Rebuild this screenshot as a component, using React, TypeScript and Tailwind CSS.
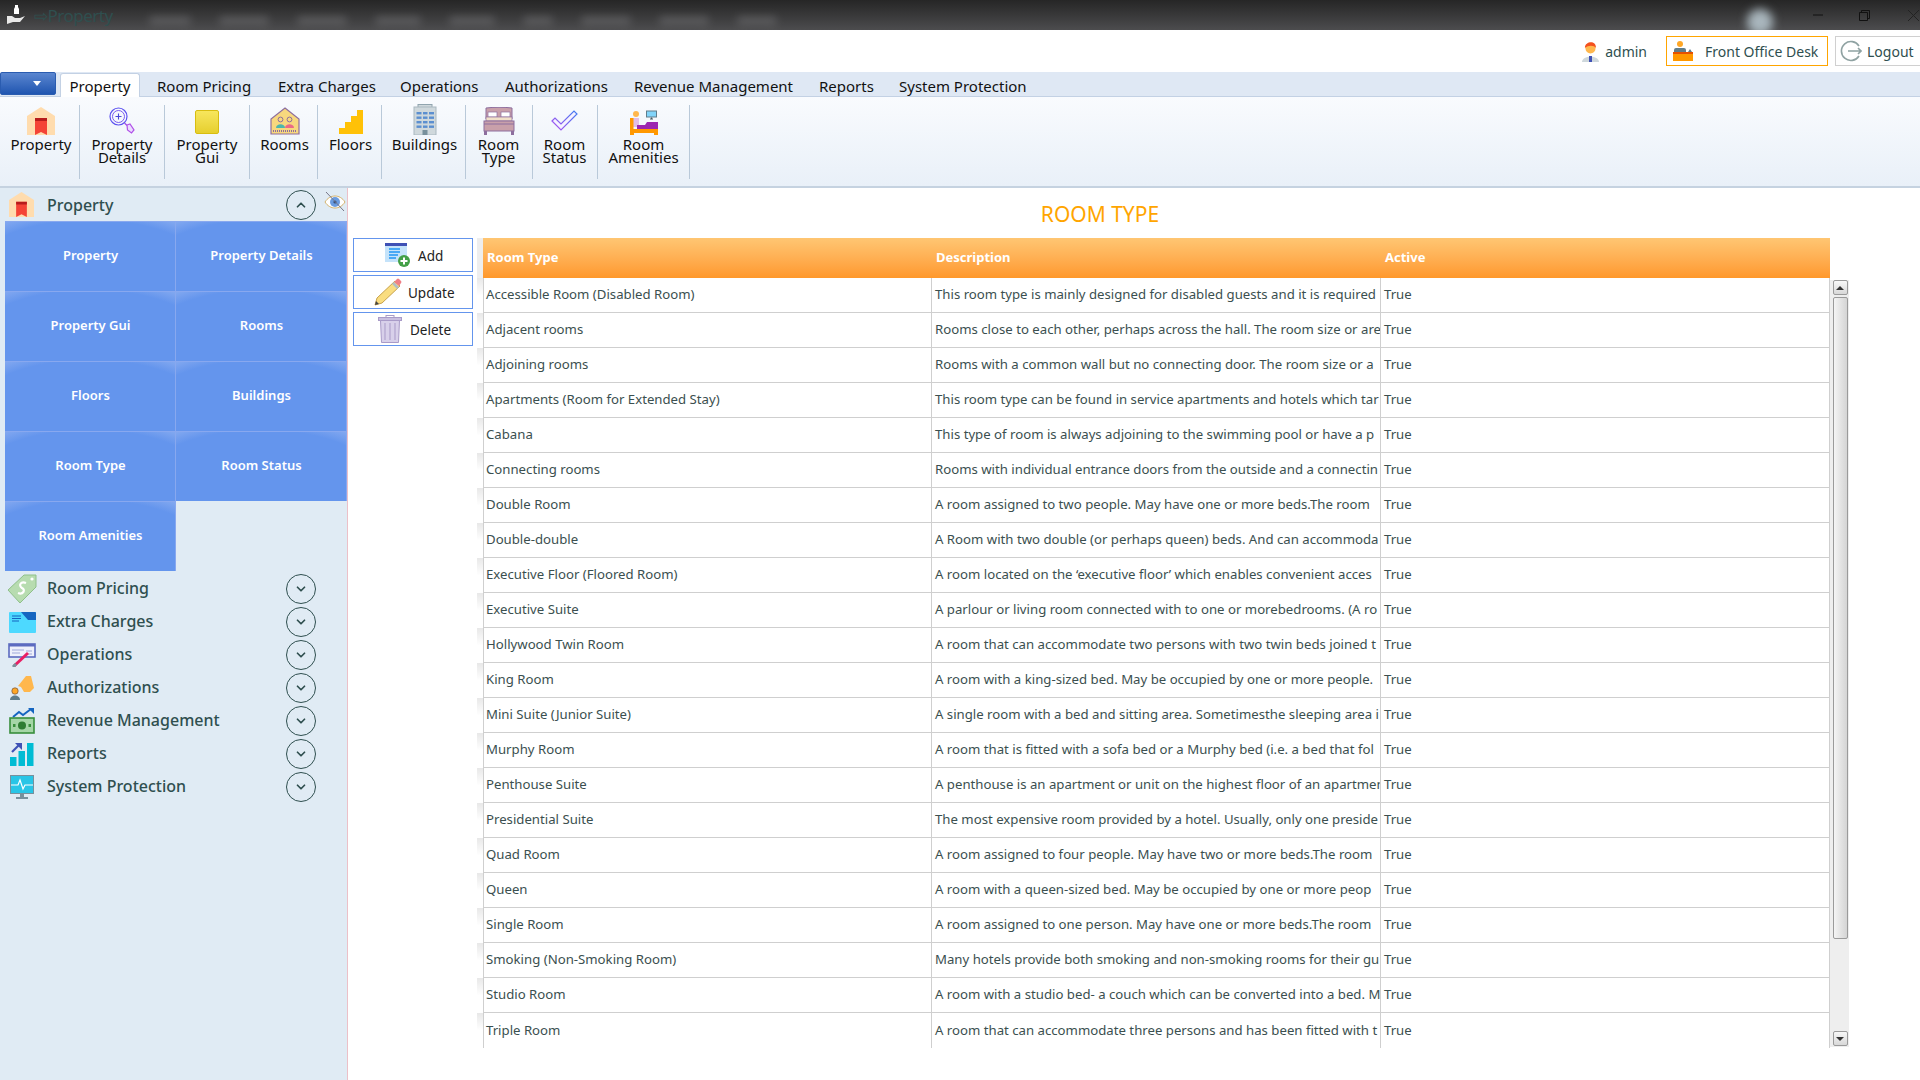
import { ChevronDown, ChevronUp } from 'lucide-react';

const tabs = [
  { label: 'Room Pricing', cls: 'w-[121px]' },
  { label: 'Extra Charges', cls: 'w-[122px]' },
  { label: 'Operations', cls: 'w-[105px]' },
  { label: 'Authorizations', cls: 'w-[129px]' },
  { label: 'Revenue Management', cls: 'w-[185px]' },
  { label: 'Reports', cls: 'w-[80px]' },
  { label: 'System Protection', cls: 'w-[140px]' },
];

function HouseIcon({ cls }: { cls: string }) {
  return (
    <svg viewBox="0 0 28 28" className={cls}>
      <path d="M14 0 L28 9 V28 H0 V9 Z" fill="#ffdcae" />
      <path d="M8 11 H20 V28 L14 25 L8 28 Z" fill="#f44336" />
      <rect x="8" y="11" width="12" height="3" fill="#b71c1c" />
    </svg>
  );
}

function DetailsIcon() {
  return (
    <svg viewBox="0 0 26 28" className="w-[26px] h-[28px]" fill="none">
      <circle cx="9.5" cy="9.5" r="8.5" stroke="#5c52f0" strokeWidth="1.2" />
      <circle cx="9.5" cy="9.5" r="6" stroke="#7a5cf0" strokeWidth="1" />
      <path d="M9.5 6.5 V12.5 M6.5 9.5 H12.5" stroke="#4a48d8" strokeWidth="1.1" />
      <path d="M15.5 16 L18 18.5" stroke="#a050e8" strokeWidth="1.2" />
      <path d="M18 18 L21 17 L25 23 L22.5 26 L18.5 23 Z" fill="#eadcff" stroke="#b050e8" strokeWidth="1.2" />
    </svg>
  );
}

function GuiIcon() {
  return <div className="w-[24px] h-[24px] mb-[1px] rounded-[2px] border border-[#d8bd10] bg-gradient-to-b from-[#f7e65c] to-[#e6cf2c]" />;
}

function RoomsIcon() {
  return (
    <svg viewBox="0 0 30 28" className="w-[30px] h-[28px]">
      <path d="M15 1 L29 12 V27 H1 V12 Z" fill="#f7d87e" stroke="#8d6e9e" strokeWidth="1.2" />
      <circle cx="10.5" cy="12.5" r="2.4" fill="#f7d87e" stroke="#8d6e9e" />
      <circle cx="19.5" cy="12.5" r="2.4" fill="#f7d87e" stroke="#8d6e9e" />
      <path d="M6 21 C6 16 15 16 15 21 Z" fill="#4db6ac" />
      <path d="M15 21 C15 16 24 16 24 21 Z" fill="#ec6a86" />
      <path d="M3 24 H27" stroke="#8d6e9e" strokeWidth="2" strokeDasharray="1 1" />
    </svg>
  );
}

function FloorsIcon() {
  return (
    <svg viewBox="0 0 24 24" className="w-[24px] h-[24px] mb-[1px]">
      <path d="M0 24 V18 H6 V12 H12 V6 H18 V0 H24 V24 Z" fill="#ffc107" />
    </svg>
  );
}

function BuildingIcon() {
  const ys = [8, 12.5, 17, 21.5];
  return (
    <svg viewBox="0 0 24 31" className="w-[24px] h-[31px]">
      <rect x="5" y="0.5" width="14" height="3" fill="#cfd8dc" stroke="#90a4ae" />
      <rect x="1" y="3" width="22" height="28" fill="#cfd8dc" stroke="#a9b8c0" />
      {ys.map((y) => (
        <g key={y} fill="#5b8fd0">
          <rect x="3.5" y={y} width="5" height="2.4" />
          <rect x="10" y={y} width="4.5" height="2.4" />
          <rect x="16" y={y} width="5" height="2.4" />
        </g>
      ))}
      <rect x="9.5" y="26" width="5" height="5" fill="#78909c" />
    </svg>
  );
}

function BedIcon() {
  return (
    <svg viewBox="0 0 32 28" className="w-[32px] h-[28px]">
      <path d="M3 1 C10 0 22 0 29 1 V12 H3 Z" fill="#c9a0aa" stroke="#8d6e9e" />
      <rect x="5" y="5" width="9" height="5" fill="#fff" stroke="#8d6e9e" strokeWidth="0.7" />
      <rect x="18" y="5" width="9" height="5" fill="#fff" stroke="#8d6e9e" strokeWidth="0.7" />
      <rect x="3" y="10" width="26" height="4" fill="#f1dfc8" stroke="#8d6e9e" strokeWidth="0.7" />
      <rect x="1" y="14" width="30" height="10" fill="#c9a0aa" stroke="#8d6e9e" />
      <path d="M1 17 H31" stroke="#8d6e9e" />
      <rect x="1" y="24" width="3" height="4" fill="#8d6e9e" />
      <rect x="28" y="24" width="3" height="4" fill="#8d6e9e" />
    </svg>
  );
}

function CheckIcon() {
  return (
    <svg viewBox="0 0 27 21" className="w-[27px] h-[21px] mb-[4px]">
      <defs>
        <linearGradient id="chk" x1="0" y1="1" x2="1" y2="0">
          <stop offset="0" stopColor="#b14ff0" />
          <stop offset="1" stopColor="#3f7df0" />
        </linearGradient>
      </defs>
      <path d="M1 11 L4 8 L10 14 L23 1 L26 4 L10 20 Z" fill="#f6f3ff" stroke="url(#chk)" strokeWidth="1.2" />
    </svg>
  );
}

function AmenitiesIcon() {
  return (
    <svg viewBox="0 0 28 25" className="w-[28px] h-[25px]">
      <circle cx="6" cy="4" r="3" fill="#ffb74d" />
      <rect x="3" y="8" width="6" height="9" fill="#e1bee7" />
      <rect x="0" y="8" width="3.5" height="15" fill="#ff9800" />
      <rect x="0" y="19" width="28" height="4" fill="#ff9800" />
      <rect x="24" y="19" width="4" height="6" fill="#ff9800" />
      <rect x="0" y="21" width="4" height="4" fill="#ff9800" />
      <path d="M7 15 H15 L17 12 H28 V19 H7 Z" fill="#9c27b0" />
      <rect x="16" y="0.5" width="11" height="7" fill="#607d8b" />
      <rect x="17" y="1.5" width="9" height="5" fill="#81d4fa" />
      <path d="M20 9 H23 M21.5 7.5 V9" stroke="#455a64" strokeWidth="1.2" />
    </svg>
  );
}

const ribbon = [
  { label: ['Property'], cls: 'w-[80px] pl-[3px]', icon: <HouseIcon cls="w-[28px] h-[28px]" /> },
  { label: ['Property', 'Details'], cls: 'w-[85px]', icon: <DetailsIcon /> },
  { label: ['Property', 'Gui'], cls: 'w-[85px]', icon: <GuiIcon /> },
  { label: ['Rooms'], cls: 'w-[68px] pl-[2px]', icon: <RoomsIcon /> },
  { label: ['Floors'], cls: 'w-[64px] pl-[2px]', icon: <FloorsIcon /> },
  { label: ['Buildings'], cls: 'w-[84px] pl-[2px]', icon: <BuildingIcon /> },
  { label: ['Room', 'Type'], cls: 'w-[67px] pr-[1px]', icon: <BedIcon /> },
  { label: ['Room', 'Status'], cls: 'w-[65px] pr-[1px]', icon: <CheckIcon /> },
  { label: ['Room', 'Amenities'], cls: 'w-[92px]', icon: <AmenitiesIcon /> },
];

const tiles = ['Property', 'Property Details', 'Property Gui', 'Rooms', 'Floors', 'Buildings', 'Room Type', 'Room Status', 'Room Amenities'];

function TagIcon() {
  return (
    <svg viewBox="0 0 30 30" className="w-[30px] h-[30px]">
      <path d="M1 16 L17 1 L29 1 L29 13 L13 29 Z" fill="#b7dcb0" stroke="#8fc08a" />
      <circle cx="25" cy="5" r="1.6" fill="#fff" />
      <path d="M19 9 C14 7 11 11 15 14 C19 16 16 21 11 19" fill="none" stroke="#fff" strokeWidth="2.2" />
    </svg>
  );
}

function FolderIcon() {
  return (
    <svg viewBox="0 0 28 22" className="w-[28px] h-[22px]">
      <path d="M1 2 Q1 1 2 1 H27 Q28 1 28 2 V21 Q28 22 27 22 H2 Q1 22 1 21 Z" fill="#4dd9ff" />
      <path d="M13 1 H27 Q28 1 28 2 V9 H20 Z" fill="#1565c0" />
      <path d="M4 5 H13 M4 7.5 H13 M4 10 H11" stroke="#1565c0" strokeWidth="1.1" />
    </svg>
  );
}

function ChequeIcon() {
  return (
    <svg viewBox="0 0 28 24" className="w-[28px] h-[24px]">
      <rect x="1" y="1" width="26" height="13" fill="#eef0fb" stroke="#5c6bc0" strokeWidth="1.6" />
      <rect x="1" y="1" width="26" height="2.5" fill="#5c6bc0" />
      <path d="M4 7 H16 M4 10 H12 M18 8 H24 M18 11 H24" stroke="#9fa8da" />
      <path d="M6 23 L20 10" stroke="#e91e63" strokeWidth="3" />
      <path d="M5 24 L8 21" stroke="#78909c" strokeWidth="3" />
    </svg>
  );
}

function HandIcon() {
  return (
    <svg viewBox="0 0 26 26" className="w-[26px] h-[26px]">
      <path d="M9 11 L17 1 H22 L25 13 L21 17 H15 L12 12 Z" fill="#ffb74d" />
      <circle cx="6" cy="16" r="3.2" fill="#ffa726" stroke="#5d4037" strokeWidth="0.6" />
      <path d="M1 25 C1 19 11 19 11 25 Z" fill="#607d8b" />
    </svg>
  );
}

function MoneyIcon() {
  return (
    <svg viewBox="0 0 26 26" className="w-[26px] h-[26px]">
      <path d="M4 9 L10 4 L14 7 L22 1" fill="none" stroke="#1565c0" strokeWidth="2" />
      <path d="M19 0 H25 V6 Z" fill="#1565c0" />
      <rect x="1" y="10" width="24" height="15" fill="#a5d6a7" stroke="#388e3c" strokeWidth="1.6" />
      <circle cx="13" cy="17.5" r="4" fill="#2e7d32" />
      <rect x="4" y="16" width="2.5" height="3" fill="#388e3c" />
      <rect x="19.5" y="16" width="2.5" height="3" fill="#388e3c" />
    </svg>
  );
}

function BarsIcon() {
  return (
    <svg viewBox="0 0 24 24" className="w-[24px] h-[24px]">
      <rect x="0" y="15" width="6.5" height="9" fill="#00bcd4" />
      <rect x="8.5" y="9" width="6.5" height="15" fill="#00bcd4" />
      <rect x="17" y="1" width="6.5" height="23" fill="#00bcd4" />
      <path d="M2 10 L9 3" stroke="#3f51b5" strokeWidth="2.2" />
      <path d="M5 1 H12 V8 Z" fill="#3f51b5" />
    </svg>
  );
}

function MonitorIcon() {
  return (
    <svg viewBox="0 0 24 24" className="w-[24px] h-[24px]">
      <rect x="0.5" y="0.5" width="23" height="18" fill="#29c5e6" stroke="#78909c" />
      <path d="M1 10 H8 L10 5 L13 14 L15 10 H23" fill="none" stroke="#fff" strokeWidth="1.2" />
      <rect x="10" y="19" width="4" height="3" fill="#78909c" />
      <rect x="6" y="22" width="12" height="2" fill="#78909c" />
    </svg>
  );
}

const sections = [
  { label: 'Room Pricing', icon: <TagIcon /> },
  { label: 'Extra Charges', icon: <FolderIcon /> },
  { label: 'Operations', icon: <ChequeIcon /> },
  { label: 'Authorizations', icon: <HandIcon /> },
  { label: 'Revenue Management', icon: <MoneyIcon /> },
  { label: 'Reports', icon: <BarsIcon /> },
  { label: 'System Protection', icon: <MonitorIcon /> },
];

const rows = [
  ['Accessible Room (Disabled Room)', 'This room type is mainly designed for disabled guests and it is required'],
  ['Adjacent rooms', 'Rooms close to each other, perhaps across the hall. The room size or are'],
  ['Adjoining rooms', 'Rooms with a common wall but no connecting door. The room size or a'],
  ['Apartments (Room for Extended Stay)', 'This room type can be found in service apartments and hotels which tar'],
  ['Cabana', 'This type of room is always adjoining to the swimming pool or have a p'],
  ['Connecting rooms', 'Rooms with individual entrance doors from the outside and a connectin'],
  ['Double Room', 'A room assigned to two people. May have one or more beds.The room'],
  ['Double-double', 'A Room with two double (or perhaps queen) beds. And can accommoda'],
  ['Executive Floor (Floored Room)', 'A room located on the ‘executive floor’ which enables convenient acces'],
  ['Executive Suite', 'A parlour or living room connected with to one or morebedrooms. (A ro'],
  ['Hollywood Twin Room', 'A room that can accommodate two persons with two twin beds joined t'],
  ['King Room', 'A room with a king-sized bed. May be occupied by one or more people.'],
  ['Mini Suite (Junior Suite)', 'A single room with a bed and sitting area. Sometimesthe sleeping area i'],
  ['Murphy Room', 'A room that is fitted with a sofa bed or a Murphy bed (i.e. a bed that fol'],
  ['Penthouse Suite', 'A penthouse is an apartment or unit on the highest floor of an apartmen'],
  ['Presidential Suite', 'The most expensive room provided by a hotel. Usually, only one preside'],
  ['Quad Room', 'A room assigned to four people. May have two or more beds.The room'],
  ['Queen', 'A room with a queen-sized bed. May be occupied by one or more peop'],
  ['Single Room', 'A room assigned to one person. May have one or more beds.The room'],
  ['Smoking (Non-Smoking Room)', 'Many hotels provide both smoking and non-smoking rooms for their gu'],
  ['Studio Room', 'A room with a studio bed- a couch which can be converted into a bed. M'],
  ['Triple Room', 'A room that can accommodate three persons and has been fitted with t'],
];

function TitleBar() {
  return (
    <div className="h-[30px] flex items-center bg-gradient-to-b from-[#262626] to-[#4c4c4e] overflow-hidden shrink-0">
      <svg viewBox="0 0 20 22" className="w-[20px] h-[22px] ml-[6px]">
        <path d="M9 1 H12 V3 L13 5 V10 H8 V5 L9 3 Z" fill="#fff" />
        <path d="M1 12 H6 L9 14 H14 L19 12 L14 18 H7 L1 20 Z" fill="#e8e8e8" />
      </svg>
      <span className="ml-[8px] text-[17px] tracking-[-0.5px] leading-none text-[#2f4f4f]">⇨Property</span>
      <div className="ml-[36px] flex gap-[28px] mt-[12px] opacity-70">
        <div className="w-[42px] h-[8px] rounded-full bg-[#6a6a6c] blur-[4px]" />
        <div className="w-[50px] h-[8px] rounded-full bg-[#6a6a6c] blur-[4px]" />
        <div className="w-[50px] h-[8px] rounded-full bg-[#6a6a6c] blur-[4px]" />
        <div className="w-[46px] h-[8px] rounded-full bg-[#6a6a6c] blur-[4px]" />
        <div className="w-[46px] h-[8px] rounded-full bg-[#6a6a6c] blur-[4px]" />
        <div className="w-[30px] h-[8px] rounded-full bg-[#6a6a6c] blur-[4px]" />
        <div className="w-[50px] h-[8px] rounded-full bg-[#6a6a6c] blur-[4px]" />
        <div className="w-[50px] h-[8px] rounded-full bg-[#6a6a6c] blur-[4px]" />
        <div className="w-[40px] h-[8px] rounded-full bg-[#6a6a6c] blur-[4px]" />
      </div>
      <div className="ml-auto w-[26px] h-[26px] mt-[14px] rounded-full bg-[#a9b6bd] blur-[5px]" />
      <svg viewBox="0 0 10 10" className="w-[10px] h-[10px] ml-[40px]" fill="none" stroke="#111">
        <path d="M0 5 H10" />
      </svg>
      <svg viewBox="0 0 11 11" className="w-[11px] h-[11px] ml-[36px]" fill="none" stroke="#111">
        <path d="M0.5 2.5 H8.5 V10.5 H0.5 Z M2.5 2.5 V0.5 H10.5 V8.5 H8.5" />
      </svg>
      <svg viewBox="0 0 11 11" className="w-[11px] h-[11px] ml-[38px] mr-[1px]" fill="none" stroke="#222">
        <path d="M0 0 L11 11 M11 0 L0 11" />
      </svg>
    </div>
  );
}

function TopBar() {
  return (
    <div className="h-[42px] flex items-center justify-end bg-white text-[14px] text-[#2f4f4f] shrink-0">
      <svg viewBox="0 0 17 21" className="w-[17px] h-[21px]">
        <path d="M0 21 C0 14 17 14 17 21 Z" fill="#cfd8dc" />
        <rect x="7" y="15" width="3" height="6" fill="#3f51b5" />
        <circle cx="8.5" cy="7.5" r="5" fill="#ffb74d" />
        <path d="M3 7 C2 1 14 -2 14 7 C12 4 6 4 3 7 Z" fill="#f4511e" />
      </svg>
      <span className="ml-[6px]">admin</span>
      <div className="ml-[19px] w-[162px] h-[30px] flex items-center border border-[#ffa500]">
        <svg viewBox="0 0 20 20" className="w-[20px] h-[20px] ml-[6px]">
          <circle cx="7" cy="3" r="3" fill="#ffa726" />
          <path d="M1 11 V9 Q1 7 3 7 H11 Q13 7 13 9 V11 Z M15 11 L17 8 L19 11 Z" fill="#607d8b" />
          <rect x="0" y="11" width="20" height="9" fill="#ff9800" />
          <rect x="0" y="11" width="20" height="2" fill="#e65100" />
        </svg>
        <span className="ml-[12px] whitespace-nowrap">Front Office Desk</span>
      </div>
      <div className="ml-[7px] w-[85px] h-[30px] flex items-center border border-r-0 border-[#d0d0d0]">
        <svg viewBox="0 0 22 22" className="w-[22px] h-[22px] ml-[4px]" fill="none" stroke="#8fa2a2" strokeWidth="1.6">
          <path d="M19 6 A9.5 9.5 0 1 0 19 16" />
          <path d="M8 11 H21 M18 8 L21 11 L18 14" />
        </svg>
        <span className="ml-[5px]">Logout</span>
      </div>
    </div>
  );
}

function TabBar() {
  return (
    <div className="h-[25px] flex bg-[#dfe8f4] border-b border-[#c3d1e4] text-[15px] text-[#111] shrink-0">
      <div className="w-[56px] h-[23px] flex items-center justify-end pr-[14px] rounded-[2px] border border-[#2a5cb0] bg-gradient-to-b from-[#5a86d0] to-[#1f55b0]">
        <div className="w-0 h-0 border-x-[4px] border-x-transparent border-t-[5px] border-t-white" />
      </div>
      <div className="ml-[4px] w-[80px] h-[25px] pt-[1px] flex items-center justify-center mt-[1px] bg-white border border-b-0 border-[#c3d1e4] rounded-t-[3px]">
        Property
      </div>
      <div className="flex ml-[17px]">
        {tabs.map((t) => (
          <div key={t.label} className={`${t.cls} h-[25px] pt-[3px] flex items-center whitespace-nowrap`}>
            {t.label}
          </div>
        ))}
      </div>
    </div>
  );
}

function Ribbon() {
  return (
    <div className="h-[91px] py-[8px] flex bg-gradient-to-b from-[#f9fbfe] to-[#e9f0f8] border-b-2 border-[#c5d2e0] text-[15px] text-[#111] shrink-0">
      {ribbon.map((r) => (
        <div key={r.label.join(' ')} className={`${r.cls} h-[74px] pt-[1px] flex flex-col items-center border-r border-[#b9c9d9]`}>
          <div className="h-[29px] flex items-end justify-center">{r.icon}</div>
          <div className="mt-[3px] text-center leading-[13px]">
            {r.label.map((l) => (
              <div key={l}>{l}</div>
            ))}
          </div>
        </div>
      ))}
    </div>
  );
}

function Sidebar() {
  return (
    <aside className="w-[348px] shrink-0 bg-[#e0ebf4] border-r border-[#ecc0c8] text-[#2f4f4f]">
      <div className="h-[33px] flex items-center">
        <div className="w-[47px] pl-[9px]">
          <HouseIcon cls="w-[25px] h-[25px]" />
        </div>
        <span className="text-[16px] font-medium">Property</span>
        <div className="ml-auto mt-[1px] w-[30px] h-[30px] rounded-full border-[1.5px] border-[#2f4f4f] flex items-center justify-center">
          <ChevronUp size={14} strokeWidth={3} />
        </div>
        <svg viewBox="0 0 22 20" className="w-[22px] h-[20px] ml-[8px] mr-[1px] -mt-[6px]">
          <path d="M1 10 C6 2 16 2 21 10 C16 18 6 18 1 10 Z" fill="#fff" stroke="#d4b26a" />
          <circle cx="11" cy="10" r="5" fill="#6a9ce0" />
          <circle cx="11" cy="10" r="1.6" fill="#34507e" />
          <path d="M2 0 L20 19" stroke="#778" />
        </svg>
      </div>
      <div className="ml-[5px] grid grid-cols-2 auto-rows-[70px]">
        {tiles.map((t) => (
          <div
            key={t}
            className="pb-[2px] pl-[1px] flex items-center justify-center border-t border-r border-[#88a8ef] bg-[radial-gradient(ellipse_90%_100%_at_50%_75%,#6495ed_78%,#8fb0f1_100%)] text-[13px] font-semibold text-white"
          >
            {t}
          </div>
        ))}
      </div>
      <div className="mt-[1px]">
        {sections.map((s) => (
          <div key={s.label} className="h-[33px] flex items-center">
            <div className="w-[47px] flex justify-center pr-[4px]">{s.icon}</div>
            <span className="text-[16px] font-medium -mt-[2px]">{s.label}</span>
            <div className="ml-auto mr-[31px] w-[30px] h-[30px] rounded-full border-[1.5px] border-[#2f4f4f] flex items-center justify-center">
              <ChevronDown size={14} strokeWidth={3} />
            </div>
          </div>
        ))}
      </div>
    </aside>
  );
}

function ActionButtons() {
  return (
    <div className="w-[120px] flex flex-col gap-[3px] text-[13.5px] text-[#222]">
      <div className="h-[34px] flex items-center border border-[#6495ed]">
        <svg viewBox="0 0 26 24" className="w-[26px] h-[24px] ml-[31px]">
          <rect x="0" y="0" width="22" height="19" fill="#c5e3fa" />
          <rect x="0" y="0" width="22" height="3" fill="#3f51b5" />
          <path d="M4 6 H15 M4 9 H15 M4 12 H13 M4 15 H11" stroke="#2196f3" strokeWidth="1.3" />
          <circle cx="19" cy="18" r="6" fill="#43a047" />
          <path d="M19 14.5 V21.5 M15.5 18 H22.5" stroke="#fff" strokeWidth="2" />
        </svg>
        <span className="ml-[7px] mt-[2px]">Add</span>
      </div>
      <div className="h-[34px] flex items-center border border-[#6495ed]">
        <svg viewBox="0 0 28 28" className="w-[28px] h-[28px] ml-[20px]">
          <path d="M1 27 L3 20 L21 3 L26 8 L8 25 Z" fill="#f9dd80" stroke="#c8a24c" />
          <path d="M20 4 L23 1 Q24 0 25 1 L27 3 Q28 4 27 5 L25 8 Z" fill="#ef7f86" />
          <path d="M19 5 L24 10" stroke="#b0bec5" strokeWidth="2.5" />
          <path d="M1 27 L2 23 L5 26 Z" fill="#444" />
        </svg>
        <span className="ml-[6px] mt-[2px]">Update</span>
      </div>
      <div className="h-[34px] flex items-center border border-[#6495ed]">
        <svg viewBox="0 0 24 28" className="w-[24px] h-[28px] ml-[24px]">
          <rect x="8" y="0.5" width="8" height="3" fill="none" stroke="#a99bc8" />
          <rect x="0.5" y="2.5" width="23" height="3" fill="#c9bfe0" stroke="#a99bc8" />
          <path d="M2.5 5.5 H21.5 L20.5 27.5 H3.5 Z" fill="#d8d0ea" stroke="#a99bc8" />
          <path d="M7 8 V25 M12 8 V25 M17 8 V25" stroke="#a99bc8" />
        </svg>
        <span className="ml-[8px] mt-[2px]">Delete</span>
      </div>
    </div>
  );
}

function RoomTable() {
  return (
    <div className="w-[1353px]">
      <div className="flex h-[40px]">
        <div className="w-[6px] bg-[#eeeeee]" />
        <div className="flex-1 grid grid-cols-[448px_449px_1fr] items-center bg-gradient-to-b from-[#ffc672] to-[#ff982a] text-[13px] font-bold text-white">
          <div className="pl-[4px]">Room Type</div>
          <div className="pl-[5px]">Description</div>
          <div className="pl-[5px]">Active</div>
        </div>
      </div>
      {rows.map(([name, desc], i) => (
        <div key={name} className="flex h-[35px]">
          <div className="w-[6px] bg-gradient-to-b from-[#e8e8e8] via-white to-white" />
          <div className={`flex-1 grid grid-cols-[448px_449px_1fr] border-l border-r border-[#cfcfcf] text-[13.2px] text-[#3b4f4f] ${i < rows.length - 1 ? 'border-b' : ''}`}>
            <div className="flex items-center pl-[2px] border-r border-[#cfcfcf] whitespace-nowrap">{name}</div>
            <div className="flex items-center pl-[3px] pr-[3px] border-r border-[#cfcfcf] whitespace-nowrap overflow-hidden">{desc}</div>
            <div className="flex items-center pl-[3px]">True</div>
          </div>
        </div>
      ))}
    </div>
  );
}

function ScrollBar() {
  return (
    <div className="w-[19px] h-[767px] mt-[42px] flex flex-col items-center bg-[#eeeeee] pl-[1px]">
      <div className="w-[15px] h-[15px] flex items-center justify-center rounded-[2px] border border-[#9a9a9a] bg-gradient-to-b from-[#f8f8f8] to-[#d8d8d8]">
        <div className="w-0 h-0 border-x-[4px] border-x-transparent border-b-[4px] border-b-[#333]" />
      </div>
      <div className="w-[15px] h-[642px] mt-[2px] rounded-[2px] border border-[#9a9a9a] bg-gradient-to-r from-[#f4f4f4] to-[#d4d4d4]" />
      <div className="mt-auto mb-[1px] w-[15px] h-[15px] flex items-center justify-center rounded-[2px] border border-[#9a9a9a] bg-gradient-to-b from-[#f8f8f8] to-[#d8d8d8]">
        <div className="w-0 h-0 border-x-[4px] border-x-transparent border-t-[4px] border-t-[#333]" />
      </div>
    </div>
  );
}

export default function App() {
  return (
    <div className="w-[1920px] h-[1080px] flex flex-col overflow-hidden bg-white font-['Noto_Sans',sans-serif]">
      <TitleBar />
      <TopBar />
      <TabBar />
      <Ribbon />
      <div className="flex-1 flex min-h-0">
        <Sidebar />
        <main className="flex-1 min-w-0">
          <div className="w-[1504px] h-[50px] pt-[3px] flex items-center justify-center text-[21px] text-[#ffa500]">ROOM TYPE</div>
          <div className="flex">
            <div className="ml-[5px] mr-[4px]">
              <ActionButtons />
            </div>
            <RoomTable />
            <ScrollBar />
          </div>
        </main>
      </div>
    </div>
  );
}
